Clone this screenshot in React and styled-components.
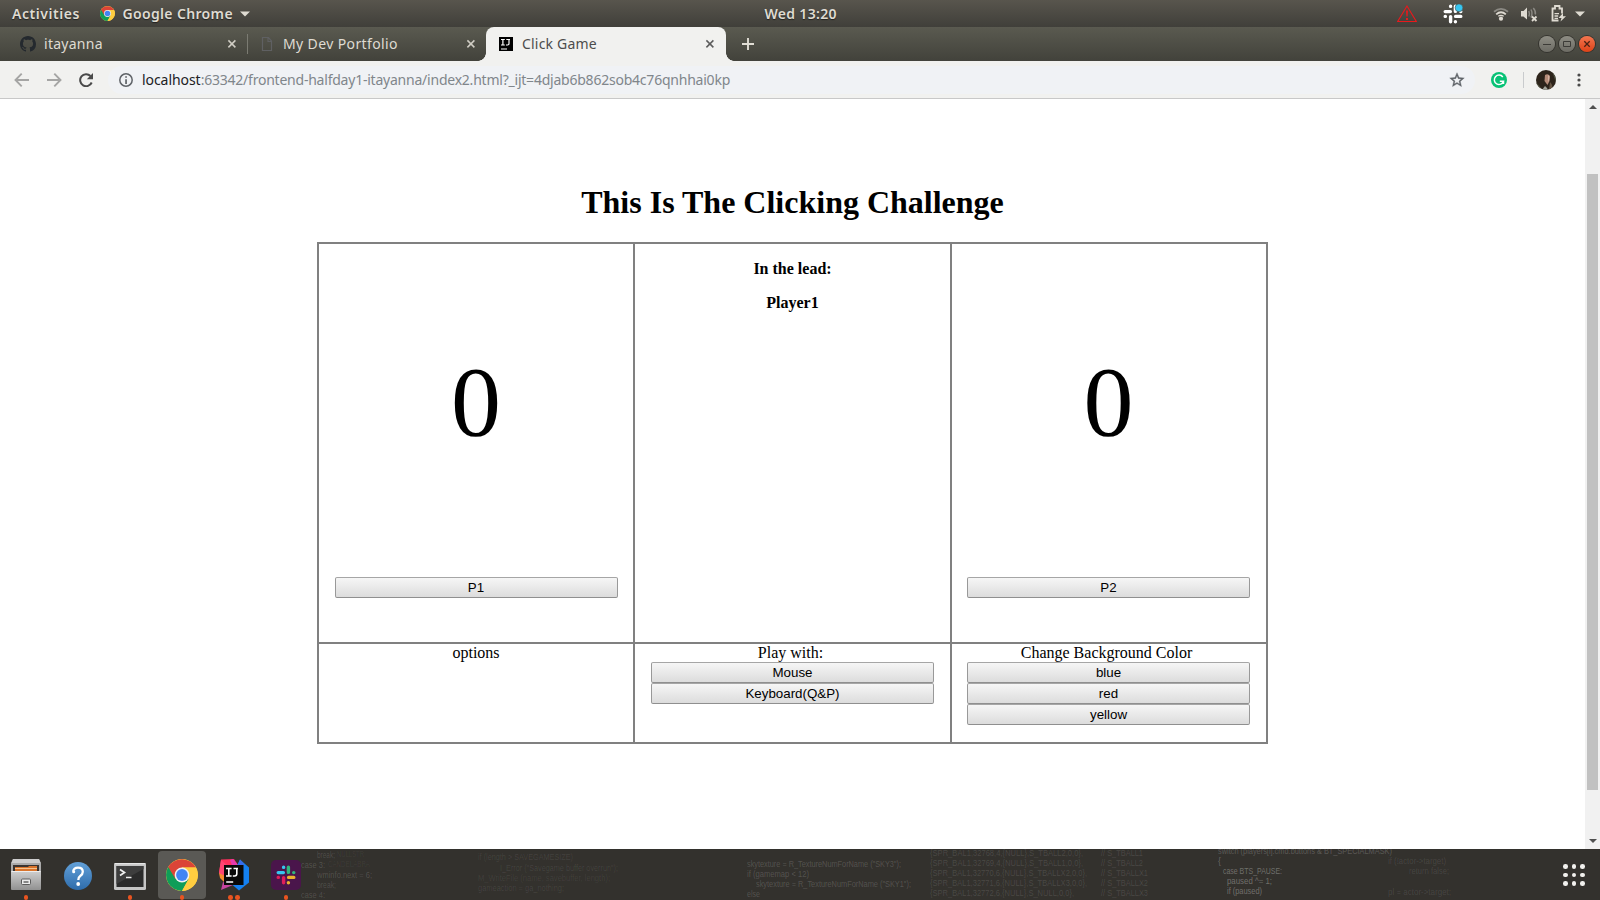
import React from "react";
import styled, { createGlobalStyle } from "styled-components";

const Global = createGlobalStyle`
  * { box-sizing: border-box; }
  body { margin: 0; background: #fff; overflow: hidden; }
`;

const Screen = styled.div`
  width: 1600px;
  height: 900px;
  display: flex;
  flex-direction: column;
  overflow: hidden;
  svg { display: block; flex: none; }
`;

const Label = styled.span`
  font-family: "Noto Sans", "Open Sans", sans-serif;
  font-size: ${(p) => p.$size || 14}px;
  font-weight: ${(p) => p.$weight || 400};
  letter-spacing: ${(p) => p.$track || 0}px;
  color: ${(p) => p.$color || "#dfdbd2"};
  line-height: 20px;
  white-space: pre;
`;

/* ---- system bar ---- */
const SystemBar = styled.header`
  height: 27px;
  flex: none;
  display: grid;
  grid-template-columns: 764.5px 1fr auto;
  align-items: center;
  background: linear-gradient(#58554d, #403f3a);
  ${Label} { text-shadow: 0 1px 1px rgba(0, 0, 0, 0.5); }
`;
const SystemLeft = styled.div`
  display: flex;
  align-items: center;
  padding-left: 12px;
`;
const AppMenu = styled.div`
  display: flex;
  align-items: center;
  gap: 7px;
  margin-left: 20.5px;
`;
const SystemTray = styled.div`
  display: flex;
  align-items: center;
`;

/* ---- tab strip ---- */
const TabStrip = styled.div`
  height: 34px;
  flex: none;
  display: flex;
  align-items: center;
  background: linear-gradient(#5a5a50, #42423b);
`;
const Tab = styled.div`
  width: ${(p) => p.$w}px;
  height: 34px;
  display: flex;
  align-items: center;
  padding: 0 ${(p) => p.$pr}px 0 ${(p) => p.$pl}px;
  position: relative;
  background: ${(p) => (p.$active ? "#f1f1ef" : "transparent")};
  border-radius: 8px 8px 0 0;
  ${(p) =>
    p.$active &&
    `&::before, &::after {
      content: "";
      position: absolute;
      bottom: 0;
      width: 8px;
      height: 8px;
    }
    &::before { left: -8px; background: radial-gradient(circle at 0 0, transparent 7.5px, #f1f1ef 8px); }
    &::after { right: -8px; background: radial-gradient(circle at 100% 0, transparent 7.5px, #f1f1ef 8px); }`}
`;
const TabTitle = styled(Label)`
  flex: 1;
  margin-left: ${(p) => p.$gap}px;
`;
const TabDivider = styled.div`
  width: 1px;
  height: 20px;
  background: #7b7b72;
`;
const NewTab = styled.div`
  flex: 1;
  padding-left: 16px;
`;
const WindowButtons = styled.div`
  display: flex;
  gap: 4px;
  padding-right: 5px;
`;
const WindowButton = styled.div`
  width: 16px;
  height: 16px;
  border-radius: 50%;
  display: flex;
  align-items: center;
  justify-content: center;
  background: ${(p) => (p.$close ? "linear-gradient(#f4764f, #dd4217)" : "linear-gradient(#8e8d84, #6c6b64)")};
  box-shadow: 0 0 0 1px #35342f;
`;

/* ---- toolbar ---- */
const Toolbar = styled.div`
  height: 38px;
  flex: none;
  display: flex;
  align-items: center;
  padding-left: 14px;
  background: #f1f1ef;
  border-bottom: 1px solid #c8c8c8;
`;
const NavButtons = styled.div`
  display: flex;
  align-items: center;
  gap: 17.5px;
  width: 94px;
`;
const AddressBar = styled.div`
  width: 1367px;
  height: 28px;
  border-radius: 14px;
  background: #f0f2f5;
  display: flex;
  align-items: center;
  padding: 0 10px 0 11px;
`;
const Url = styled.div`
  flex: 1;
  margin-left: 9px;
  display: flex;
`;
const ToolbarRight = styled.div`
  display: flex;
  align-items: center;
  padding-left: 16px;
`;
const ToolbarRule = styled.div`
  width: 1px;
  height: 16px;
  background: #c9cbcd;
  margin: 0 12px 0 16px;
`;

/* ---- page ---- */
const Viewport = styled.div`
  height: 750px;
  flex: none;
  display: flex;
  background: #fff;
`;
const Page = styled.main`
  width: 1585px;
  display: flex;
  flex-direction: column;
  align-items: center;
  font: 16px/18px "Liberation Serif", "Times New Roman", serif;
  color: #000;
`;
const Title = styled.h1`
  margin: 85px 0 0;
  height: 58px;
  font-size: 32px;
  line-height: 37px;
  font-weight: 700;
`;
const Board = styled.div`
  display: grid;
  grid-template-columns: 314px 315px 314px;
  grid-template-rows: 398px 98px;
  gap: 2px;
  padding: 2px;
  background: #808080;
`;
const Cell = styled.section`
  background: #fff;
  padding: 0 ${(p) => (p.$last ? "16px 0 15px" : "16px")};
  display: flex;
  flex-direction: column;
  align-items: center;
  text-align: center;
`;
const Score = styled.div`
  height: 333px;
  padding-top: 100px;
  font-size: 100px;
  line-height: 115px;
`;
const Caption = styled.div`
  padding-right: 4px;
`;
const LeadText = styled.p`
  margin: 16px 0 0;
  font-weight: 700;
`;
const GameButton = styled.button`
  width: 283px;
  height: 21px;
  padding: 0;
  border: 1px solid;
  border-color: #a6a6a6 #999 #8f8f8f;
  border-radius: 2px;
  background: linear-gradient(#f6f6f6, #dcdcdc);
  color: #000;
  font: 13.333px/15px "Liberation Sans", Arial, sans-serif;
`;
const Scrollbar = styled.div`
  width: 15px;
  background: #f1f1f1;
  display: flex;
  flex-direction: column;
  align-items: center;
  justify-content: space-between;
  padding: 6px 0;
`;
const Thumb = styled.div`
  width: 11px;
  height: 616px;
  margin: 3px 0 -13px;
  background: #c1c1c1;
`;

/* ---- dock ---- */
const Dock = styled.footer`
  height: 51px;
  flex: none;
  position: relative;
  display: flex;
  justify-content: space-between;
  background: #33312d;
`;
const Wallpaper = styled.svg`
  position: absolute;
  inset: 0;
  font-family: "Liberation Sans Narrow", "Liberation Sans", sans-serif;
  font-size: 9.5px;
`;
const DockApps = styled.div`
  position: relative;
  display: flex;
  gap: 4px;
  padding: 2px 0 0 2px;
`;
const DockItem = styled.div`
  width: 48px;
  height: 48px;
  border-radius: 4px;
  display: flex;
  flex-direction: column;
  align-items: center;
  background: ${(p) => (p.$active ? "#5a5955" : "transparent")};
  svg { margin-top: 8px; }
`;
const Dots = styled.div`
  display: flex;
  flex: none;
  gap: 2px;
  margin-top: 4px;
  height: 4.6px;
`;
const Dot = styled.i`
  width: 4.6px;
  height: 4.6px;
  border-radius: 50%;
  background: #e95420;
`;
const AppGrid = styled.div`
  position: relative;
  display: grid;
  grid-template-columns: repeat(3, 4.6px);
  gap: 4px;
  align-content: center;
  padding: 1px 15px 0 0;
`;
const GridDot = styled.i`
  height: 4.6px;
  border-radius: 50%;
  background: #f2f1ee;
`;

const ChromeIcon = ({ size }) => (
  <svg width={size} height={size} viewBox="0 0 32 32">
    <circle cx="16" cy="16" r="16" fill="#ffcd40" />
    <path d="M16 16 L2.2 8 A16 16 0 0 0 16 32 L23 20Z" fill="#0f9d58" />
    <path d="M16 16 L9.3 19.8 L2.2 8 A16 16 0 0 1 29.9 8.6 L16 8.6Z" fill="#db4437" />
    <path d="M16 8.6H29.9A16 16 0 0 1 16 32L22.6 19.8Z" fill="#ffcd40" />
    <circle cx="16" cy="16" r="7.4" fill="#f1f1f1" />
    <circle cx="16" cy="16" r="5.9" fill="#4285f4" />
  </svg>
);

const CloseIcon = ({ color }) => (
  <svg width="10" height="10" viewBox="0 0 10 10">
    <path d="M1.4 1.4l7 7M8.4 1.4l-7 7" stroke={color} strokeWidth="1.5" />
  </svg>
);

const DownTriangle = () => (
  <svg width="10" height="6" viewBox="0 0 10 6">
    <path d="M0 .5h10L5 5.5z" fill="#dfdbd2" />
  </svg>
);

const GithubIcon = () => (
  <svg width="16" height="16" viewBox="0 0 16 16">
    <path
      fill="#24292e"
      d="M8 0C3.58 0 0 3.58 0 8c0 3.54 2.29 6.53 5.47 7.59.4.07.55-.17.55-.38 0-.19-.01-.82-.01-1.49-2.01.37-2.53-.49-2.69-.94-.09-.23-.48-.94-.82-1.13-.28-.15-.68-.52-.01-.53.63-.01 1.08.58 1.23.82.72 1.21 1.87.87 2.33.66.07-.52.28-.87.51-1.07-1.78-.2-3.64-.89-3.64-3.95 0-.87.31-1.59.82-2.15-.08-.2-.36-1.02.08-2.12 0 0 .67-.21 2.2.82.64-.18 1.32-.27 2-.27s1.36.09 2 .27c1.53-1.04 2.2-.82 2.2-.82.44 1.1.16 1.92.08 2.12.51.56.82 1.27.82 2.15 0 3.07-1.87 3.75-3.65 3.95.29.25.54.73.54 1.48 0 1.07-.01 1.93-.01 2.2 0 .21.15.46.55.38A8.01 8.01 0 0016 8c0-4.42-3.58-8-8-8z"
    />
  </svg>
);

const FileIcon = () => (
  <svg width="12" height="16" viewBox="0 0 12 16">
    <path d="M1.5 1.5h6l3 3.5v9.5h-9zM7 1.5V5.500h3.500" fill="none" stroke="#5f6062" strokeWidth="1.2" />
  </svg>
);

const JetbrainsMark = ({ size }) => (
  <svg width={size} height={size} viewBox="0 0 14 14">
    <path d="M0 0h14v14H0z" />
    <path d="M2 2.500h3.800M3.900 2.500v5.500M2 8h3.800M7.300 2.500H11M10 2.500v4q0 1.500-1.500 1.500H7M2 12h6" fill="none" stroke="#fff" strokeWidth="1.2" />
  </svg>
);

const WarningIcon = () => (
  <svg width="20" height="18" viewBox="0 0 20 18">
    <path d="M10 1L19.300 16.500H.7z" fill="none" stroke="#e8191c" strokeWidth="1.1" />
    <path d="M9 5.500h2l-.4 6H9.400zM9 13h2v2H9z" fill="#e8191c" />
  </svg>
);

const SlackBars = ({ colors }) => (
  <g strokeWidth="3.4" strokeLinecap="round">
    <path d="M2.200 7.600H7.400M7.600 2.200V2.400" stroke={colors[0]} />
    <path d="M12.400 2.200V7.400M17.700 7.600H17.800" stroke={colors[1]} />
    <path d="M12.600 12.400H17.800M12.400 17.600V17.800" stroke={colors[2]} />
    <path d="M7.600 12.600V17.800M2.200 12.400H2.400" stroke={colors[3]} />
  </g>
);

const SlackTray = () => (
  <svg width="20" height="20" viewBox="0 0 20 20">
    <SlackBars colors={["#fff", "#fff", "#fff", "#fff"]} />
    <circle cx="16" cy="3.800" r="3.900" fill="#36c5f0" stroke="#4b4943" strokeWidth=".6" />
  </svg>
);

const WifiIcon = () => (
  <svg width="16" height="14" viewBox="0 0 16 14" fill="none" strokeWidth="1.800">
    <path d="M1 4.800Q8-1 15 4.800" stroke="#8b8983" />
    <path d="M3.200 7.400Q8 3 12.800 7.400" stroke="#dfdbd2" />
    <path d="M5.300 9.300Q8 7.300 10.700 9.300" stroke="#dfdbd2" strokeWidth="1.200" />
    <circle cx="8" cy="11.700" r="2.100" fill="#dfdbd2" />
  </svg>
);

const VolumeIcon = () => (
  <svg width="18" height="16" viewBox="0 0 18 16" fill="none">
    <path d="M1 5h2.500L7 1.500v12L3.500 10.500H1z" fill="#dfdbd2" />
    <path d="M8.800 5Q10 7.500 8.800 10.500M11 3.500Q13 7 11 11.500M13.300 2Q16 5 15.300 8.500" stroke="#8b8983" strokeWidth="1.500" />
    <path d="M12 10.500l4.500 4.500M16.500 10.500L12 15" stroke="#dfdbd2" strokeWidth="1.800" />
  </svg>
);

const BatteryIcon = () => (
  <svg width="15" height="17" viewBox="0 0 15 17" fill="none">
    <path d="M7.500 15.500h-6v-12H4V1h4.500v2.500H11v5" stroke="#dfdbd2" strokeWidth="1.800" />
    <path d="M3.500 8.700H8M3.500 11h3.700M3.500 13.300H7" stroke="#dfdbd2" strokeWidth="1.300" />
    <path d="M12 8l-4.500 5h3l-1 3.500 5.500-5.200h-3z" fill="#dfdbd2" />
  </svg>
);

const Arrow = ({ flip }) => (
  <svg width="15" height="14" viewBox="0 0 15 14" fill="none" stroke="#a5a5a4" strokeWidth="1.900">
    <path d={flip ? "M0 7h13M7.300 .7L13.500 7l-6.200 6.300" : "M15 7H2M7.700.7L1.500 7l6.200 6.300"} />
  </svg>
);

const ReloadIcon = () => (
  <svg width="15" height="14" viewBox="0 0 15 14">
    <path d="M12.700 9.500A6 6 0 1 1 11.500 3" fill="none" stroke="#4a4a4a" strokeWidth="2" />
    <path d="M14 0v6.300H7.800z" fill="#4a4a4a" />
  </svg>
);

const InfoIcon = () => (
  <svg width="14" height="14" viewBox="0 0 14 14">
    <circle cx="7" cy="7" r="6.200" fill="none" stroke="#5f6368" strokeWidth="1.500" />
    <path d="M6.200 3.200h1.700v1.600H6.200zM6.200 6.200h1.700v4.700H6.200z" fill="#5f6368" />
  </svg>
);

const StarIcon = () => (
  <svg width="16" height="16" viewBox="1 1 22 22">
    <path
      fill="#5f6368"
      stroke="#5f6368"
      strokeWidth=".5"
      d="M22 9.240l-7.190-.62L12 2 9.190 8.630 2 9.240l5.460 4.730L5.820 21 12 17.270 18.180 21l-1.630-7.030L22 9.240zM12 15.400l-3.760 2.270 1-4.280-3.320-2.880 4.380-.38L12 6.100l1.710 4.040 4.380.38-3.320 2.880 1 4.280L12 15.400z"
    />
  </svg>
);

const GrammarlyIcon = () => (
  <svg width="16" height="16" viewBox="0 0 16 16">
    <circle cx="8" cy="8" r="8" fill="#07c275" />
    <path d="M11.800 5A4.700 4.700 0 1 0 12.500 9.200H8.800M12.500 9.200V12" fill="none" stroke="#fff" strokeWidth="1.500" />
  </svg>
);

const Avatar = () => (
  <svg width="20" height="20" viewBox="0 0 20 20">
    <defs>
      <clipPath id="face"><circle cx="10" cy="10" r="10" /></clipPath>
    </defs>
    <g clipPath="url(#face)">
      <path d="M0 0h20v20H0z" fill="#2d241b" />
      <path d="M0 12Q4 16 6 20H0zM16 1l4 5v7z" fill="#4f5140" />
      <path d="M9 5q3-2 5 1l-.5 5-2 4-3-4z" fill="#b58b78" />
      <path d="M12 5q2 1 1 5l-1 2z" fill="#d5b2a2" />
      <path d="M6 20l3-4 2 2 1 2z" fill="#a3a49b" />
      <path d="M14 12q3 3 2 6l-3 2z" fill="#655443" />
    </g>
  </svg>
);

const MenuDots = () => (
  <svg width="4" height="14" viewBox="0 0 4 14" fill="#4a4a4a">
    <circle cx="2" cy="2" r="1.600" />
    <circle cx="2" cy="7" r="1.600" />
    <circle cx="2" cy="12" r="1.600" />
  </svg>
);

const FilesIcon = () => (
  <svg width="32" height="32" viewBox="0 0 32 32">
    <defs>
      <linearGradient id="cab" x2="0" y2="1"><stop stopColor="#cfcfcf" /><stop offset="1" stopColor="#919191" /></linearGradient>
    </defs>
    <path d="M1 4L3 0h26l2 4v26H1z" fill="#aaa" />
    <path d="M3 0h26l1.500 4h-29z" fill="#cdcdcd" />
    <path d="M3 6h26v6H3z" fill="#3a3430" />
    <path d="M5 8h13l1-1h8v5H5z" fill="#d9742c" />
    <path d="M5 9.500h22" stroke="#f6c38c" />
    <path d="M1 12h30v18q0 1-1 1H2q-1 0-1-1z" fill="url(#cab)" />
    <path d="M1.500 12.500h29" stroke="#ededed" />
    <rect x="11.500" y="20" width="9" height="5.500" rx="1" fill="#ececec" stroke="#5c5c5c" />
    <path d="M13.500 23h5" stroke="#666" strokeWidth="1.500" />
  </svg>
);

const HelpIcon = () => (
  <svg width="32" height="32" viewBox="0 0 32 32">
    <defs>
      <linearGradient id="help" x2="0" y2="1"><stop stopColor="#62a0d8" /><stop offset="1" stopColor="#2e6cab" /></linearGradient>
    </defs>
    <circle cx="16" cy="17" r="14" fill="url(#help)" />
    <path d="M11.200 12.500q.5-3.800 4.800-3.800 4.800 0 4.800 4.100 0 2.400-2.600 4.200-1.900 1.300-1.900 4" fill="none" stroke="#fff" strokeWidth="2.300" />
    <circle cx="11.700" cy="12.700" r="1.500" fill="#fff" />
    <circle cx="16.200" cy="25" r="1.900" fill="#fff" />
  </svg>
);

const TerminalIcon = () => (
  <svg width="32" height="32" viewBox="0 0 32 32">
    <rect x="0" y="4" width="32" height="27" rx="1.500" fill="#c6c6c6" />
    <path d="M.5 4.700h31" stroke="#eee" />
    <rect x="2.500" y="7" width="27" height="21" fill="#2b2b2b" />
    <path d="M2.500 7h27v3l-27 15z" fill="#3d3d3d" />
    <path d="M6 10.500l4.500 3L6 16.500M12 18.500h5.500" fill="none" stroke="#f0f0f0" strokeWidth="1.700" />
  </svg>
);

const IdeaIcon = () => (
  <svg width="32" height="32" viewBox="0 0 32 32">
    <path d="M1 14l5-3v12l-4-4z" fill="#f78b2e" />
    <path d="M3 .5L16 0l4 6L9 12 1 14z" fill="#fe315d" />
    <path d="M1 14L3 1l6 5v12z" fill="#ff4573" />
    <path d="M12 1l3-1 5 6-5 3z" fill="#e53ab0" />
    <path d="M22 .5l9 8v15l-10 8-7-6 10-9-5-10z" fill="#1480f0" />
    <path d="M22 .5l4 4.500-2 11-5-8z" fill="#3a6bea" />
    <path d="M3 31l2-8 10 3z" fill="#c7449f" />
    <g transform="translate(6 6)">
      <rect width="19.500" height="20" fill="#090909" />
      <path d="M2 3.500h5.600M4.800 3.500v7.500M2 11h5.600M9.500 3.500h4.500M12.800 3.500v5.300q0 2.200-2.200 2.200H8.800M2.200 17h7" fill="none" stroke="#fff" strokeWidth="1.600" />
    </g>
  </svg>
);

const SlackIcon = () => (
  <svg width="32" height="32" viewBox="0 0 32 32">
    <rect x="1" y="1" width="30" height="30" rx="5" fill="#4a154b" />
    <g transform="translate(6 6)">
      <SlackBars colors={["#36c5f0", "#2eb67d", "#ecb22e", "#e01e5a"]} />
    </g>
  </svg>
);

/* x, baseline, drawn width, opacity, line */
const codeLines = [
  [317, 9, 18, 0.14, "break;"],
  [301, 19, 24, 0.16, "case 3:"],
  [317, 29, 55, 0.15, "wminfo.next = 6;"],
  [317, 39, 19, 0.14, "break;"],
  [301, 49, 24, 0.15, "case 4:"],
  [337, 8, 27, 0.06, "NULLSTR"],
  [328, 18, 42, 0.06, "CANDELABRA"],
  [478, 11, 95, 0.09, "if (length > SAVEGAMESIZE)"],
  [500, 22, 118, 0.09, "I_Error (\"Savegame buffer overrun\");"],
  [478, 32, 132, 0.08, "M_WriteFile (name, savebuffer, length);"],
  [478, 42, 86, 0.09, "gameaction = ga_nothing;"],
  [747, 18, 154, 0.17, "skytexture = R_TextureNumForName (\"SKY3\");"],
  [747, 28, 62, 0.17, "if (gamemap < 12)"],
  [756, 38, 155, 0.17, "skytexture = R_TextureNumForName (\"SKY1\");"],
  [747, 48, 13, 0.17, "else"],
  [930, 7, 153, 0.12, "{SPR_BAL1,32768,4,{NULL},S_TBALL2,0,0},"],
  [930, 17, 153, 0.12, "{SPR_BAL1,32769,4,{NULL},S_TBALL1,0,0},"],
  [930, 27, 157, 0.12, "{SPR_BAL1,32770,6,{NULL},S_TBALLX2,0,0},"],
  [930, 37, 157, 0.12, "{SPR_BAL1,32771,6,{NULL},S_TBALLX3,0,0},"],
  [930, 47, 144, 0.12, "{SPR_BAL1,32772,6,{NULL},S_NULL,0,0},"],
  [1101, 7, 42, 0.12, "// S_TBALL1"],
  [1101, 17, 42, 0.12, "// S_TBALL2"],
  [1101, 27, 47, 0.12, "// S_TBALLX1"],
  [1101, 37, 47, 0.12, "// S_TBALLX2"],
  [1101, 47, 47, 0.12, "// S_TBALLX3"],
  [1218, 5, 174, 0.2, "switch (players[i].cmd.buttons & BT_SPECIALMASK)"],
  [1218, 15, 3, 0.24, "{"],
  [1223, 25, 59, 0.3, "case BTS_PAUSE:"],
  [1227, 35, 45, 0.3, "paused ^= 1;"],
  [1227, 45, 35, 0.3, "if (paused)"],
  [1388, 15, 58, 0.1, "if (!actor->target)"],
  [1409, 25, 40, 0.1, "return false;"],
  [1388, 46, 63, 0.1, "pl = actor->target;"],
];

const dockApps = [
  { icon: <FilesIcon />, dots: 1 },
  { icon: <HelpIcon />, dots: 0 },
  { icon: <TerminalIcon />, dots: 1 },
  { icon: <ChromeIcon size={32} />, dots: 1, active: true },
  { icon: <IdeaIcon />, dots: 2 },
  { icon: <SlackIcon />, dots: 1 },
];

const Spaced = styled.div`
  margin-right: ${(p) => p.$r}px;
`;

export default function App() {
  return (
    <Screen>
      <Global />
      <SystemBar>
        <SystemLeft>
          <Label $weight={600} $track={0.55}>Activities</Label>
          <AppMenu>
            <ChromeIcon size={15} />
            <Label $weight={600} $track={0.35}>Google Chrome</Label>
            <DownTriangle />
          </AppMenu>
        </SystemLeft>
        <Label $weight={600} $track={0.3}>Wed 13:20</Label>
        <SystemTray>
          <Spaced $r={26}><WarningIcon /></Spaced>
          <Spaced $r={30}><SlackTray /></Spaced>
          <Spaced $r={11}><WifiIcon /></Spaced>
          <Spaced $r={13}><VolumeIcon /></Spaced>
          <Spaced $r={9}><BatteryIcon /></Spaced>
          <Spaced $r={15}><DownTriangle /></Spaced>
        </SystemTray>
      </SystemBar>

      <TabStrip>
        <Tab $w={247} $pl={20} $pr={10}>
          <GithubIcon />
          <TabTitle $gap={8} $track={0.27}>itayanna</TabTitle>
          <CloseIcon color="#d0cdc4" />
        </Tab>
        <TabDivider />
        <Tab $w={238} $pl={13} $pr={10}>
          <FileIcon />
          <TabTitle $gap={10} $track={0.38}>My Dev Portfolio</TabTitle>
          <CloseIcon color="#d0cdc4" />
        </Tab>
        <Tab $active $w={240} $pl={13} $pr={11}>
          <JetbrainsMark size={14} />
          <TabTitle $gap={9} $track={0.2} $color="#4c4c4c">Click Game</TabTitle>
          <CloseIcon color="#5c5c5c" />
        </Tab>
        <NewTab>
          <svg width="12" height="12" viewBox="0 0 12 12">
            <path d="M6 0v12M0 6h12" stroke="#e0ddd4" strokeWidth="1.900" />
          </svg>
        </NewTab>
        <WindowButtons>
          <WindowButton>
            <svg width="8" height="8"><path d="M0 4.500h8" stroke="#3c3b37" /></svg>
          </WindowButton>
          <WindowButton>
            <svg width="8" height="8"><path d="M.5 1.500h7v5h-7z" fill="none" stroke="#3c3b37" /></svg>
          </WindowButton>
          <WindowButton $close>
            <svg width="8" height="8"><path d="M1.300 1.300l5.400 5.400M6.700 1.300L1.300 6.700" stroke="#4a2214" strokeWidth="1.300" /></svg>
          </WindowButton>
        </WindowButtons>
      </TabStrip>

      <Toolbar>
        <NavButtons>
          <Arrow />
          <Arrow flip />
          <ReloadIcon />
        </NavButtons>
        <AddressBar>
          <InfoIcon />
          <Url>
            <Label $color="#202124" $track={-0.06}>localhost</Label>
            <Label $color="#80868b" $track={-0.225}>:63342/frontend-halfday1-itayanna/index2.html?_ijt=4djab6b862sob4c76qnhhai0kp</Label>
          </Url>
          <StarIcon />
        </AddressBar>
        <ToolbarRight>
          <GrammarlyIcon />
          <ToolbarRule />
          <Avatar />
          <Spaced $r={21} />
          <MenuDots />
        </ToolbarRight>
      </Toolbar>

      <Viewport>
        <Page>
          <Title>This Is The Clicking Challenge</Title>
          <Board>
            <Cell>
              <Score>0</Score>
              <GameButton>P1</GameButton>
            </Cell>
            <Cell>
              <LeadText>In the lead:</LeadText>
              <LeadText>Player1</LeadText>
            </Cell>
            <Cell $last>
              <Score>0</Score>
              <GameButton>P2</GameButton>
            </Cell>
            <Cell>options</Cell>
            <Cell>
              <Caption>Play with:</Caption>
              <GameButton>Mouse</GameButton>
              <GameButton>Keyboard(Q&amp;P)</GameButton>
            </Cell>
            <Cell $last>
              <Caption>Change Background Color</Caption>
              <GameButton>blue</GameButton>
              <GameButton>red</GameButton>
              <GameButton>yellow</GameButton>
            </Cell>
          </Board>
        </Page>
        <Scrollbar>
          <svg width="8" height="4"><path d="M0 4L4 0l4 4z" fill="#505050" /></svg>
          <Thumb />
          <svg width="8" height="4"><path d="M0 0h8L4 4z" fill="#505050" /></svg>
        </Scrollbar>
      </Viewport>

      <Dock>
        <Wallpaper width="1600" height="51">
          {codeLines.map(([x, y, w, o, line]) => (
            <text key={`${x}-${y}`} x={x} y={y} textLength={w} lengthAdjust="spacingAndGlyphs" fill="#fff" fillOpacity={o}>
              {line}
            </text>
          ))}
        </Wallpaper>
        <DockApps>
          {dockApps.map((app, i) => (
            <DockItem key={i} $active={app.active}>
              {app.icon}
              <Dots>
                {Array.from({ length: app.dots }, (_, d) => <Dot key={d} />)}
              </Dots>
            </DockItem>
          ))}
        </DockApps>
        <AppGrid>
          {Array.from({ length: 9 }, (_, i) => <GridDot key={i} />)}
        </AppGrid>
      </Dock>
    </Screen>
  );
}
